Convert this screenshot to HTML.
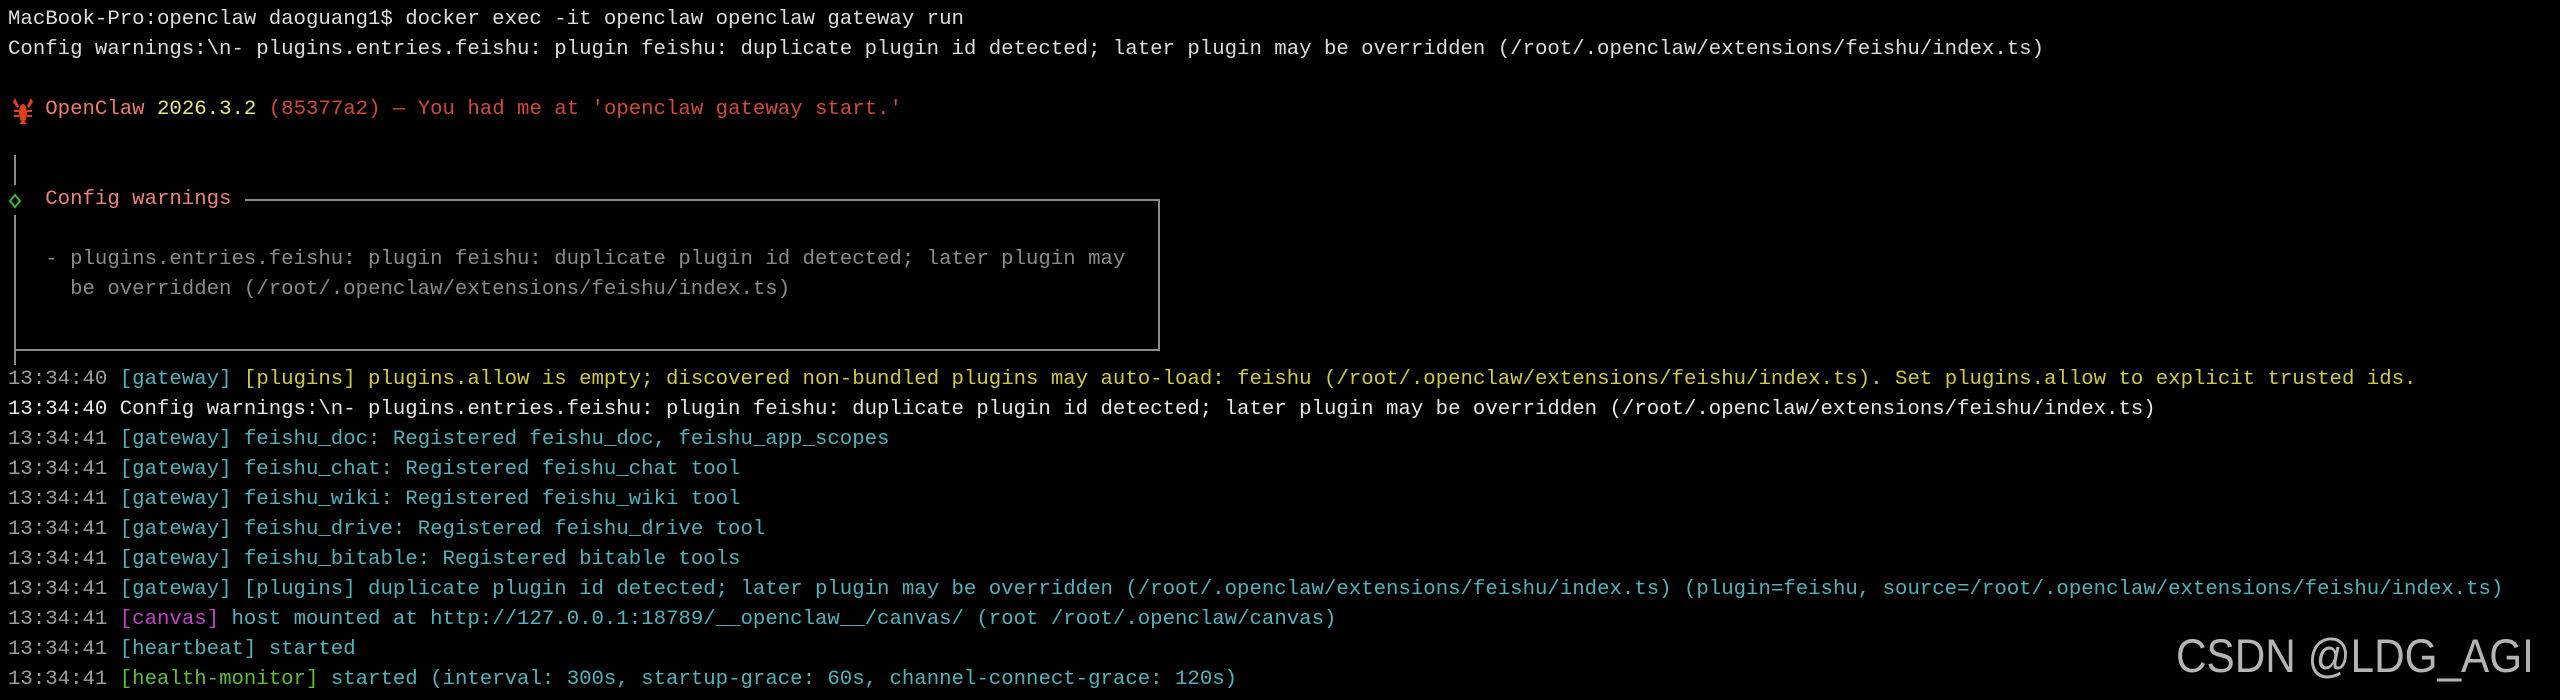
<!DOCTYPE html>
<html><head><meta charset="utf-8">
<style>
html,body{margin:0;padding:0;background:#000;}
body{width:2560px;height:700px;position:relative;overflow:hidden;}
pre{position:absolute;left:8px;top:5px;margin:0;font-family:"Liberation Mono",monospace;font-size:20.7px;line-height:30px;color:#dcdcdc;white-space:pre;}
.t{color:#9c9c9c}.w{color:#e6e6e6}
.c{color:#4fb3bd}.y{color:#cfc93f}.m{color:#c63fc6}.g{color:#5cbf35}
.oc{color:#f07a68}.ver{color:#e6e679}.r{color:#d24a35}.cw{color:#f08078}.gr{color:#8a8a8a}
.ln{position:absolute;background:#8a8a8a;}
.wm{position:absolute;left:2176px;top:628px;font-family:"Liberation Sans",sans-serif;font-size:47px;color:#b4b4b4;white-space:nowrap;transform:scaleX(0.9);transform-origin:0 0;}
</style></head><body>
<pre>MacBook-Pro:openclaw daoguang1$ docker exec -it openclaw openclaw gateway run
Config warnings:\n- plugins.entries.feishu: plugin feishu: duplicate plugin id detected; later plugin may be overridden (/root/.openclaw/extensions/feishu/index.ts)

   <span class="oc">OpenClaw</span> <span class="ver">2026.3.2</span> <span class="r">(85377a2) — You had me at 'openclaw gateway start.'</span>


   <span class="cw">Config warnings</span>

   <span class="gr">- plugins.entries.feishu: plugin feishu: duplicate plugin id detected; later plugin may</span>
     <span class="gr">be overridden (/root/.openclaw/extensions/feishu/index.ts)</span>


<span class="t">13:34:40</span> <span class="c">[gateway]</span> <span class="y">[plugins] plugins.allow is empty; discovered non-bundled plugins may auto-load: feishu (/root/.openclaw/extensions/feishu/index.ts). Set plugins.allow to explicit trusted ids.</span>
<span class="w">13:34:40 Config warnings:\n- plugins.entries.feishu: plugin feishu: duplicate plugin id detected; later plugin may be overridden (/root/.openclaw/extensions/feishu/index.ts)</span>
<span class="t">13:34:41</span> <span class="c">[gateway] feishu_doc: Registered feishu_doc, feishu_app_scopes</span>
<span class="t">13:34:41</span> <span class="c">[gateway] feishu_chat: Registered feishu_chat tool</span>
<span class="t">13:34:41</span> <span class="c">[gateway] feishu_wiki: Registered feishu_wiki tool</span>
<span class="t">13:34:41</span> <span class="c">[gateway] feishu_drive: Registered feishu_drive tool</span>
<span class="t">13:34:41</span> <span class="c">[gateway] feishu_bitable: Registered bitable tools</span>
<span class="t">13:34:41</span> <span class="c">[gateway] [plugins] duplicate plugin id detected; later plugin may be overridden (/root/.openclaw/extensions/feishu/index.ts) (plugin=feishu, source=/root/.openclaw/extensions/feishu/index.ts)</span>
<span class="t">13:34:41</span> <span class="m">[canvas]</span> <span class="c">host mounted at http://127.0.0.1:18789/__openclaw__/canvas/ (root /root/.openclaw/canvas)</span>
<span class="t">13:34:41</span> <span class="c">[heartbeat] started</span>
<span class="t">13:34:41</span> <span class="g">[health-monitor]</span> <span class="c">started (interval: 300s, startup-grace: 60s, channel-connect-grace: 120s)</span></pre>
<svg style="position:absolute;left:12px;top:96px" width="22" height="30" viewBox="0 0 22 30">
<g fill="#e0401e"><ellipse cx="11" cy="17" rx="4" ry="9"/><path d="M3 2 L7 10 L5 12 L1 6Z"/><path d="M19 2 L15 10 L17 12 L21 6Z"/><rect x="2" y="14" width="5" height="2"/><rect x="15" y="14" width="5" height="2"/><rect x="2" y="19" width="5" height="2"/><rect x="15" y="19" width="5" height="2"/><path d="M7 28 L11 24 L15 28Z"/></g></svg>
<svg style="position:absolute;left:8px;top:193px" width="14" height="16" viewBox="0 0 14 16"><path d="M7 2 L12 8 L7 14 L2 8Z" fill="none" stroke="#3fb83a" stroke-width="2"/></svg>
<div class="ln" style="left:14px;top:155px;width:2px;height:30px"></div>
<div class="ln" style="left:14px;top:215px;width:2px;height:150px"></div>
<div class="ln" style="left:245px;top:199px;width:915px;height:2px"></div>
<div class="ln" style="left:1158px;top:199px;width:2px;height:152px"></div>
<div class="ln" style="left:14px;top:349px;width:1146px;height:2px"></div>
<div class="wm">CSDN @LDG_AGI</div>
</body></html>
